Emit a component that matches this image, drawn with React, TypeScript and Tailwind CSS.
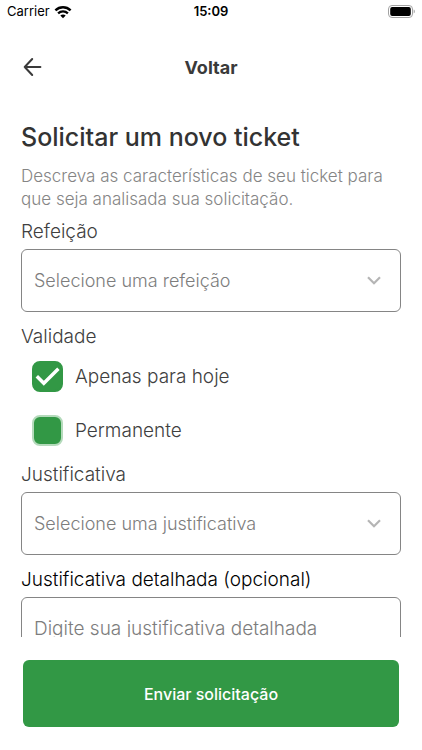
import { useState } from "react";
import type { ReactNode } from "react";

interface SelectFieldProps {
  id: string;
  label: string;
  placeholder: string;
  options: string[];
}

interface CheckFieldProps {
  label: string;
  checked: boolean;
  onChange: () => void;
}

const meals = ["Café da manhã", "Almoço", "Jantar"];
const reasons = ["Aula no contraturno", "Projeto de pesquisa", "Outro"];

const StatusBar = () => (
  <div className="grid h-6 shrink-0 grid-cols-3 items-center px-[7px] text-black">
    <div className="flex items-center gap-1 text-[13px]">
      <span>Carrier</span>
      <svg width="18" height="13" viewBox="0 0 18 13" fill="none" aria-hidden="true">
        <path d="M1.4 4.4C5.7 0.2 12.3 0.2 16.6 4.4" stroke="currentColor" strokeWidth="2.4" />
        <path d="M4.1 7.4C6.9 4.7 11.1 4.7 13.9 7.4" stroke="currentColor" strokeWidth="2.3" />
        <path d="M9 12.2L6.3 9.6C7.8 8.2 10.2 8.2 11.7 9.6Z" fill="currentColor" />
      </svg>
    </div>
    <span className="text-center text-[13px] font-semibold">15:09</span>
    <svg className="justify-self-end" width="27" height="14" viewBox="0 0 27 14" fill="none" aria-hidden="true">
      <rect x="0.5" y="0.5" width="24" height="12" rx="3.5" stroke="#a3a3a3" />
      <rect x="2.2" y="2" width="20.6" height="9" rx="2" fill="black" />
      <path d="M25.7 4.6C27.2 5.2 27.2 7.8 25.7 8.4Z" fill="#a3a3a3" />
    </svg>
  </div>
);

const FieldLabel = ({ htmlFor, children }: { htmlFor: string; children: ReactNode }) => (
  <label htmlFor={htmlFor} className="block text-[19px] leading-6 font-light text-[#404040]">
    {children}
  </label>
);

const SelectField = ({ id, label, placeholder, options }: SelectFieldProps) => (
  <div>
    <FieldLabel htmlFor={id}>{label}</FieldLabel>
    <div className="relative mt-[5px]">
      <select
        id={id}
        defaultValue=""
        className="h-[63px] w-full appearance-none rounded-md border border-[#858585] bg-white px-3 text-lg font-light text-[#7d7d7d]"
      >
        <option value="" disabled>
          {placeholder}
        </option>
        {options.map((option) => (
          <option key={option}>{option}</option>
        ))}
      </select>
      <svg
        className="pointer-events-none absolute inset-y-0 right-5 my-auto text-[#b5b5b5]"
        width="14"
        height="9"
        viewBox="0 0 14 9"
        fill="none"
        aria-hidden="true"
      >
        <path d="M1 1.2L7 7.2L13 1.2" stroke="currentColor" strokeWidth="2.2" />
      </svg>
    </div>
  </div>
);

const CheckField = ({ label, checked, onChange }: CheckFieldProps) => (
  <label className="flex items-center gap-3 text-[19px] leading-6 font-light text-[#404040]">
    <span className="relative size-[31px]">
      <input
        type="checkbox"
        checked={checked}
        onChange={onChange}
        className="block size-[31px] appearance-none rounded-lg border-2 border-[#b4dabb] bg-[#329845] checked:border-[#329845]"
      />
      {checked && (
        <svg
          className="pointer-events-none absolute inset-0 text-white"
          width="31"
          height="31"
          viewBox="0 0 31 31"
          fill="none"
          aria-hidden="true"
        >
          <path d="M4.8 15.2L11.8 22.3L26.4 7.7" stroke="currentColor" strokeWidth="3.4" />
        </svg>
      )}
    </span>
    {label}
  </label>
);

const App = () => {
  const [validity, setValidity] = useState("today");

  return (
    <div className="flex h-screen flex-col bg-white font-['Inter',sans-serif]">
      <StatusBar />
      <header className="grid h-[87px] shrink-0 grid-cols-3 items-center px-[21px] text-[#3a3a3a]">
        <button type="button" aria-label="Voltar" className="justify-self-start">
          <svg width="24" height="24" viewBox="0 0 24 24" fill="none" aria-hidden="true">
            <path
              d="M11.2 3L3.7 11L11.2 19M3.7 11H19.4"
              stroke="currentColor"
              strokeWidth="2"
              strokeLinecap="round"
              strokeLinejoin="round"
            />
          </svg>
        </button>
        <h1 className="text-center text-lg font-bold">Voltar</h1>
      </header>

      <main className="min-h-0 flex-1 overflow-y-auto px-[21px] pt-2 [scrollbar-width:none]">
        <h2 className="text-[25px] leading-9 font-medium text-[#333333]">Solicitar um novo ticket</h2>
        <p className="mt-[10px] text-[17px] leading-[23px] font-light text-[#858585]">
          Descreva as características de seu ticket para que seja analisada sua solicitação.
        </p>
        <form id="ticket" className="mt-[9px] flex flex-col gap-[13px]" onSubmit={(e) => e.preventDefault()}>
          <SelectField id="meal" label="Refeição" placeholder="Selecione uma refeição" options={meals} />
          <fieldset className="pb-1">
            <legend className="text-[19px] leading-6 font-light text-[#404040]">Validade</legend>
            <div className="mt-3 flex flex-col gap-[23px] pl-[11px]">
              <CheckField
                label="Apenas para hoje"
                checked={validity === "today"}
                onChange={() => setValidity("today")}
              />
              <CheckField
                label="Permanente"
                checked={validity === "always"}
                onChange={() => setValidity("always")}
              />
            </div>
          </fieldset>
          <SelectField id="reason" label="Justificativa" placeholder="Selecione uma justificativa" options={reasons} />
          <div>
            <label htmlFor="details" className="block text-[19px] leading-6 font-light text-black">
              Justificativa detalhada (opcional)
            </label>
            <textarea
              id="details"
              placeholder="Digite sua justificativa detalhada"
              className="mt-[5px] block h-32 w-full resize-none rounded-md border border-[#858585] px-3 py-[19px] text-[19px] leading-6 font-light placeholder:text-[#7d7d7d]"
            />
          </div>
        </form>
      </main>

      <footer className="shrink-0 px-[23px] py-[23px]">
        <button
          type="submit"
          form="ticket"
          className="h-[67px] w-full rounded-md bg-[#329845] text-base font-medium text-white"
        >
          Enviar solicitação
        </button>
      </footer>
    </div>
  );
};

export default App;
